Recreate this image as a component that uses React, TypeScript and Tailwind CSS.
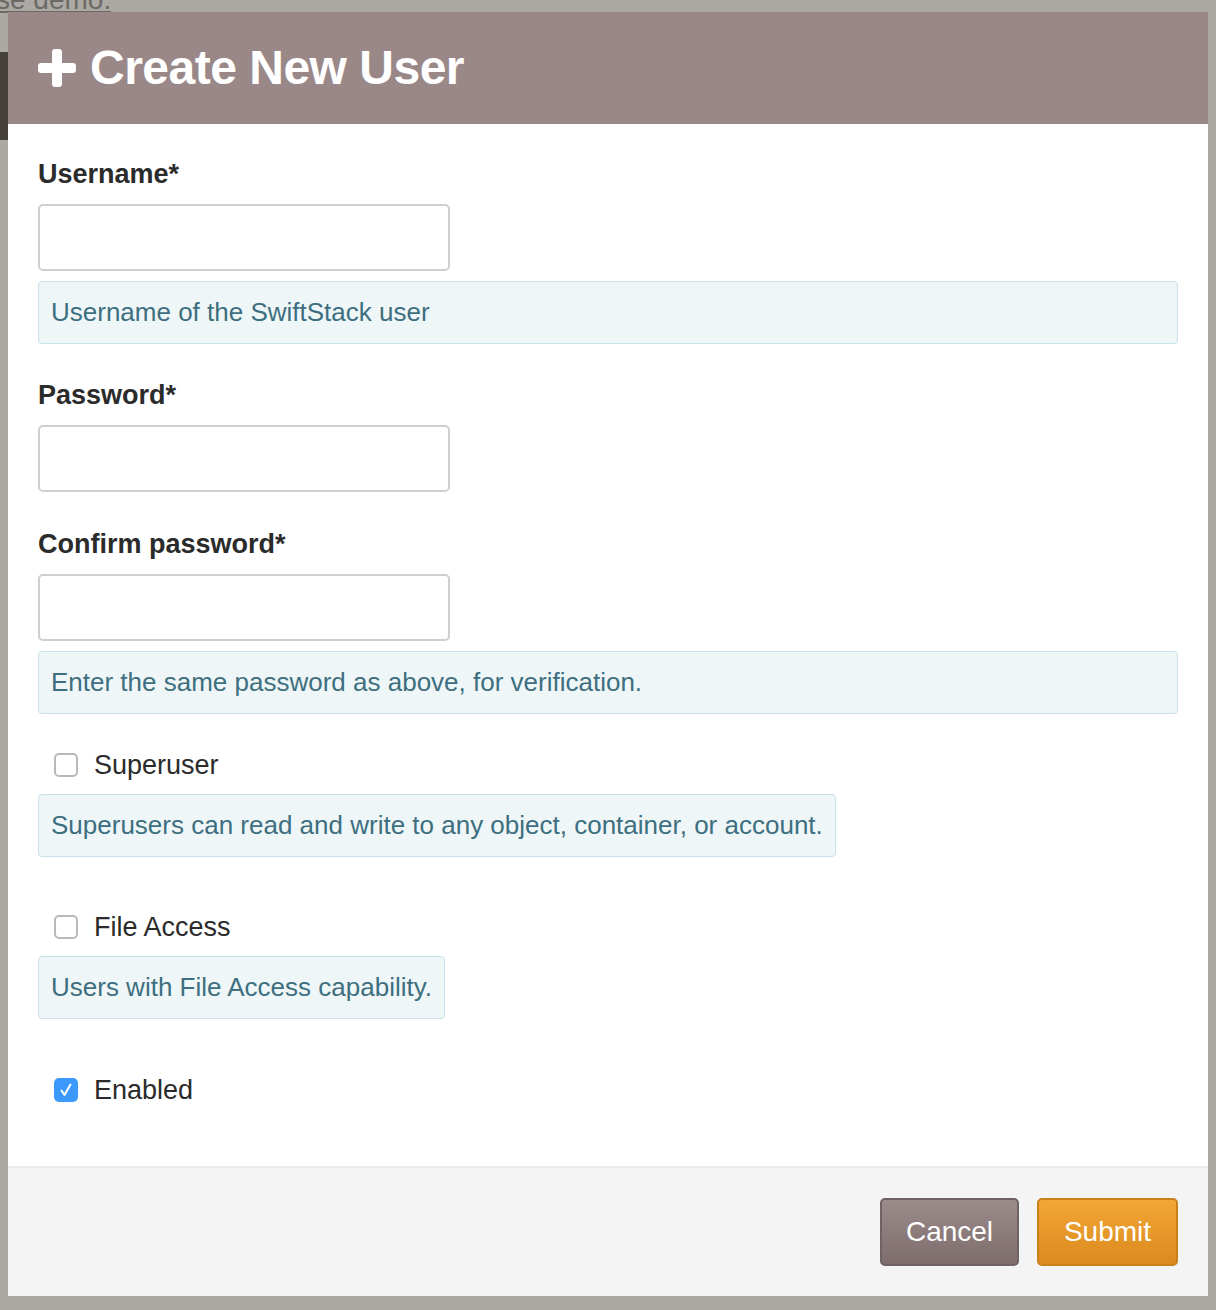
const Help = ({ children, full }: { children: string; full?: boolean }) => (
  <div
    className={`${full ? 'w-full' : 'w-fit'} h-[63px] flex items-center px-[12px] rounded-[4px] border border-[#c9e2ea] bg-[#eff6f8] text-[#3d6f80] text-[26px]`}
  >
    {children}
  </div>
)

const Field = ({ label }: { label: string }) => (
  <div>
    <div className="font-bold text-[27px] text-[#2b2b2b] h-[30px] leading-[30px]">{label}</div>
    <div className="mt-[15px] w-[412px] h-[67px] rounded-[5px] border-2 border-[#cfcfcf] bg-white" />
  </div>
)

const Check = ({ label, checked }: { label: string; checked?: boolean }) => (
  <label className="flex items-center gap-[16px] pl-[16px] h-[40px] text-[27px] text-[#2b2b2b]">
    {checked ? (
      <span className="w-[24px] h-[24px] rounded-[5px] bg-[#3b99fc] flex items-center justify-center">
        <svg width="16" height="16" viewBox="0 0 16 16" fill="none">
          <path d="M3.5 8.5 L6.5 13 L12.5 2.5" stroke="white" strokeWidth="2" strokeLinecap="round" strokeLinejoin="round" />
        </svg>
      </span>
    ) : (
      <span className="w-[24px] h-[24px] rounded-[5px] border-2 border-[#b9b9b9] bg-white" />
    )}
    {label}
  </label>
)

export default function App() {
  return (
    <div className="w-[1216px] h-[1310px] bg-[#aca8a3] overflow-hidden pt-[12px] px-[8px] font-[Liberation_Sans,Arial,sans-serif] relative">
      <div className="absolute top-[-14px] left-[-4px] text-[28px] leading-[28px] text-[#6d6a66] underline">se demo.</div>
      <div className="absolute left-0 top-[52px] w-[8px] h-[88px] bg-[#46403b]" />
      <div className="bg-white h-[1284px] flex flex-col relative">
        <div className="h-[112px] bg-[#9a8888] flex items-center pl-[30px] gap-[14px]">
          <svg width="38" height="38" viewBox="0 0 38 38">
            <rect x="14" y="0" width="10" height="38" rx="3" fill="white" />
            <rect x="0" y="14" width="38" height="10" rx="3" fill="white" />
          </svg>
          <span className="text-white text-[48px] font-bold tracking-[-0.5px]">Create New User</span>
        </div>
        <div className="flex-1 px-[30px] pt-[35px]">
          <Field label="Username*" />
          <div className="mt-[10px]">
            <Help full>Username of the SwiftStack user</Help>
          </div>
          <div className="mt-[36px]">
            <Field label="Password*" />
          </div>
          <div className="mt-[37px]">
            <Field label="Confirm password*" />
          </div>
          <div className="mt-[10px]">
            <Help full>Enter the same password as above, for verification.</Help>
          </div>
          <div className="mt-[31px]">
            <Check label="Superuser" />
          </div>
          <div className="mt-[9px]">
            <Help>Superusers can read and write to any object, container, or account.</Help>
          </div>
          <div className="mt-[50px]">
            <Check label="File Access" />
          </div>
          <div className="mt-[9px]">
            <Help>Users with File Access capability.</Help>
          </div>
          <div className="mt-[51px]">
            <Check label="Enabled" checked />
          </div>
        </div>
        <div className="h-[130px] bg-[#f4f4f4] border-t-2 border-[#ebebeb] flex items-center justify-end gap-[18px] pr-[30px]">
          <button className="w-[139px] h-[68px] rounded-[5px] border-2 border-[#6f6262] bg-gradient-to-b from-[#9b8b8b] to-[#7f6d6d] text-white text-[28px]">
            Cancel
          </button>
          <button className="w-[141px] h-[68px] rounded-[5px] border-2 border-[#c9811a] bg-gradient-to-b from-[#f2a735] to-[#dc8a1e] text-white text-[28px]">
            Submit
          </button>
        </div>
      </div>
    </div>
  )
}
